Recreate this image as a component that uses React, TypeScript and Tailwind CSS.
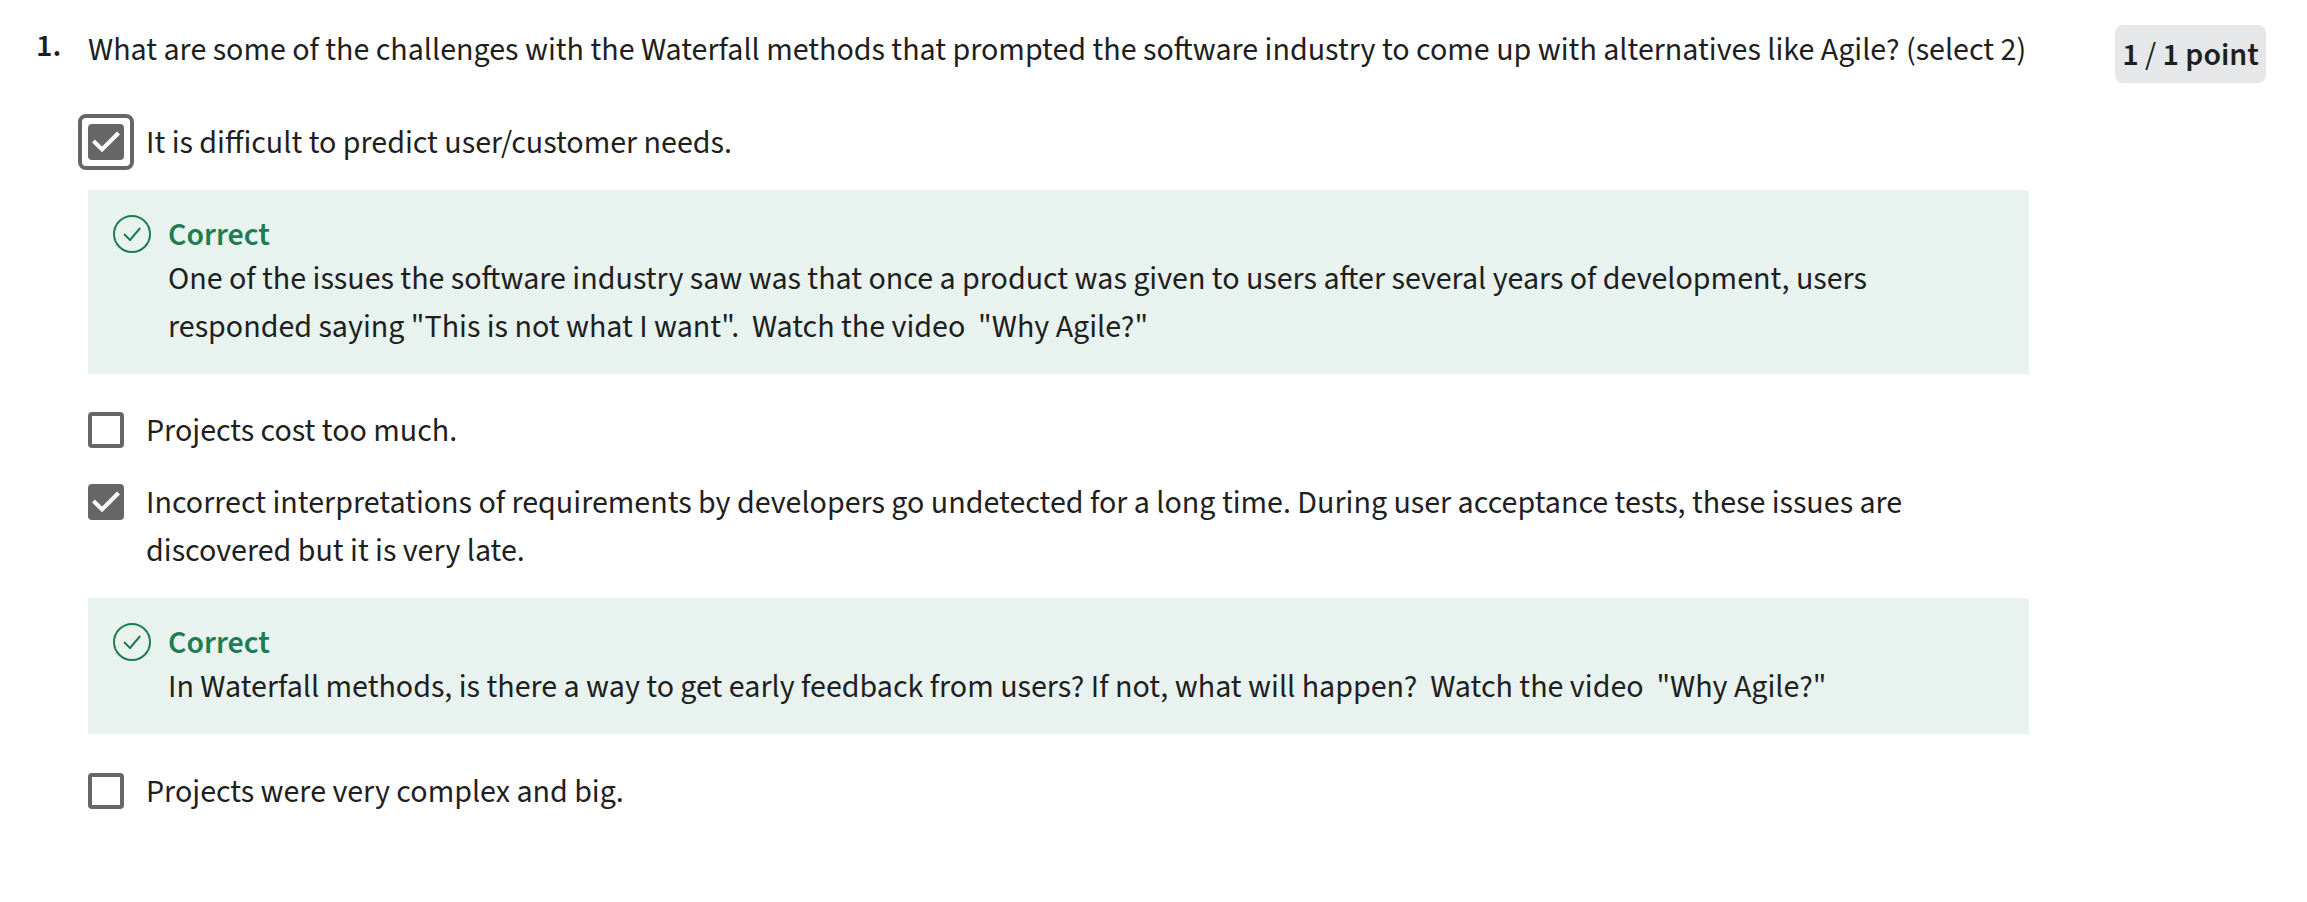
import type { ReactNode } from "react";

function CheckBox({ checked, focused }: { checked: boolean; focused?: boolean }) {
  return (
    <span
      role="checkbox"
      aria-checked={checked}
      className={`relative mt-[6px] size-9 shrink-0 rounded border-4 border-[#666666] ${checked ? "bg-[#666666]" : "bg-white"}`}
    >
      {checked && (
        <svg viewBox="0 0 36 36" className="-m-1 size-9 max-w-none" fill="none" stroke="#ffffff" strokeWidth="4">
          <path d="M5.5 17 L14 25.5 L30.5 9" />
        </svg>
      )}
      {focused && <span className="absolute -inset-[14px] rounded-lg border-4 border-[#666666]" />}
    </span>
  );
}

function Option({ checked, focused, children }: { checked: boolean; focused?: boolean; children: ReactNode }) {
  return (
    <div className="flex gap-[22px]">
      <CheckBox checked={checked} focused={focused} />
      <p className="mt-px -mb-px">{children}</p>
    </div>
  );
}

function Feedback({ children }: { children: ReactNode }) {
  return (
    <div className="my-6 mb-8 flex gap-4 bg-[#e8f2ee] p-6">
      <svg viewBox="0 0 40 40" className="size-10 shrink-0" fill="none" stroke="#1d7c50" strokeWidth="2">
        <circle cx="20" cy="20" r="18" />
        <path d="M12 20 L18 26 L28.2 14" />
      </svg>
      <div className="mt-px -mb-px">
        <h3 className="leading-10 font-semibold text-[#1d7c50]">Correct</h3>
        <p className="whitespace-pre-wrap">{children}</p>
      </div>
    </div>
  );
}

export default function App() {
  return (
    <main className="flex h-[902px] items-start bg-white pt-[25px] pr-[41px] pl-9 font-['Source_Sans_Pro','Source_Sans_3','Noto_Sans_CJK_SC',sans-serif] text-[32px] leading-[48px] text-[#1f1f1f]">
      <span className="-mt-[3px] w-[52px] shrink-0 font-semibold">1.</span>
      <section className="w-[1941px] shrink-0 pt-px">
        <h2 className="mb-[44px] whitespace-nowrap">
          What are some of the challenges with the Waterfall methods that prompted the software industry to come up with alternatives like Agile? (select 2)
        </h2>
        <Option checked focused>
          It is difficult to predict user/customer needs.
        </Option>
        <Feedback>
          One of the issues the software industry saw was that once a product was given to users after several years of development, users
          <br />
          {'responded saying "This is not what I want".  Watch the video  "Why Agile?"'}
        </Feedback>
        <Option checked={false}>Projects cost too much.</Option>
        <div className="mt-6">
          <Option checked>
            Incorrect interpretations of requirements by developers go undetected for a long time. During user acceptance tests, these issues are
            <br />
            discovered but it is very late.
          </Option>
        </div>
        <Feedback>
          {'In Waterfall methods, is there a way to get early feedback from users? If not, what will happen?  Watch the video  "Why Agile?"'}
        </Feedback>
        <div className="pt-px">
          <Option checked={false}>Projects were very complex and big.</Option>
        </div>
      </section>
      <span className="ml-auto h-[58px] w-[151px] rounded-lg bg-[#e5e7e8] pt-[6px] text-center font-semibold whitespace-nowrap">
        1 <span className="font-normal">/</span> 1 point
      </span>
    </main>
  );
}
